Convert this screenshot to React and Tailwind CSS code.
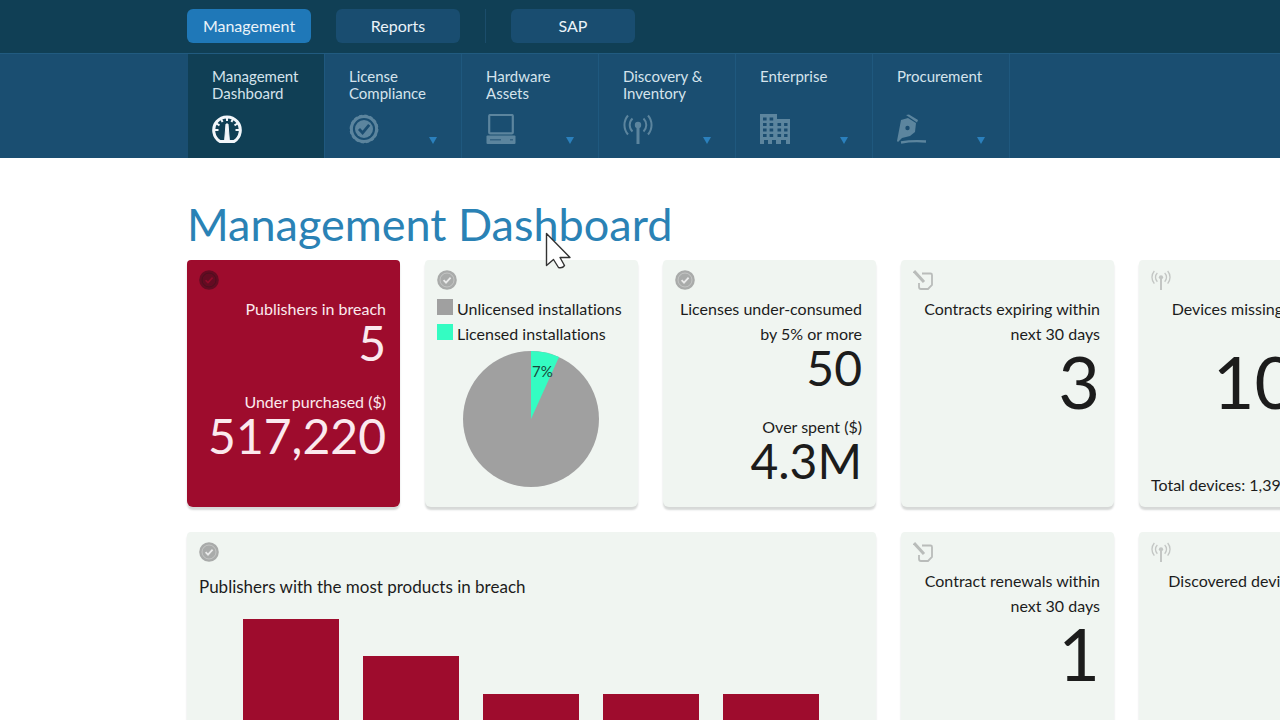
import clsx from 'clsx'

const GaugeIcon = ({ className }) => (
    <svg viewBox="0 0 30 30" className={className} fill="none" stroke="currentColor" aria-hidden="true">
        <path d="M8 27.5A13.3 13.3 0 1 1 22 27.5Z" strokeWidth="3" strokeLinejoin="round" />
        <path d="M15 3v4M9 5l1.6 3M21 5l-1.6 3M4.5 9.5l3 1.8M25.5 9.5l-3 1.8M2.5 16h4M27.5 16h-4" strokeWidth="2" />
        <path d="M14 10h2l1.5 18h-5z" fill="currentColor" strokeWidth="1" />
    </svg>
)

const BadgeIcon = ({ className }) => (
    <svg viewBox="0 0 30 30" className={className} fill="none" stroke="currentColor" aria-hidden="true">
        <circle cx="15" cy="15" r="12.6" strokeWidth="3" />
        <circle cx="15" cy="15" r="13.6" strokeWidth="1.6" strokeDasharray="3.2 2.14" />
        <circle cx="15" cy="15" r="9" fill="currentColor" stroke="none" />
        <path d="M10 15l3.6 3.8 6.6-8" className="stroke-[#1b4d70]" strokeWidth="2.8" />
    </svg>
)

const SealIcon = ({ className }) => (
    <svg viewBox="0 0 20 20" className={className} aria-hidden="true">
        <circle cx="10" cy="10" r="9.8" fill="currentColor" />
        <circle cx="10" cy="10" r="7" fill="none" stroke="#fff" strokeOpacity="0.3" />
        <path d="M6.6 10.2l2.4 2.4 4.6-5" fill="none" stroke="#fff" strokeOpacity="0.75" strokeWidth="1.8" />
    </svg>
)

const DarkSealIcon = ({ className }) => (
    <svg viewBox="0 0 20 20" className={className} aria-hidden="true">
        <circle cx="10" cy="10" r="9.8" fill="#640b22" />
        <circle cx="10" cy="10" r="7" fill="none" stroke="#4c101e" />
        <path d="M6.6 10.2l2.4 2.4 4.6-5" fill="none" stroke="#8f0c2a" strokeWidth="1.6" />
    </svg>
)

const ComputerIcon = ({ className }) => (
    <svg viewBox="0 0 30 30" className={className} aria-hidden="true">
        <path d="M4.2 1h21.6q1 0 1 1v16.400q0 1-1 1H4.2q-1 0-1-1V2q0-1 1-1z" fill="none" stroke="currentColor" strokeWidth="2.2" />
        <rect x="0.5" y="21.500" width="29" height="8.500" rx="1" fill="currentColor" />
        <path d="M4 25.800h11M24 25.800h3" stroke="#1b4d70" strokeOpacity="0.6" strokeWidth="1.4" />
    </svg>
)

const AntennaIcon = ({ className }) => (
    <svg viewBox="0 0 30 30" className={className} fill="none" stroke="currentColor" strokeWidth="2" aria-hidden="true">
        <path d="M9.5 4.5a9 9 0 0 0 0 13M20.5 4.5a9 9 0 0 1 0 13M5 1.5a14.5 14.5 0 0 0 0 19M25 1.5a14.5 14.5 0 0 1 0 19" />
        <circle cx="15" cy="11" r="3.2" fill="currentColor" stroke="none" />
        <path d="M15 12v18" strokeWidth="3" />
    </svg>
)

const BuildingIcon = ({ className }) => (
    <svg viewBox="0 0 30 30" className={className} aria-hidden="true">
        <path d="M0 0h17v5h13v25h-4v-4h-5v4h-5v-4h-4v4H8v-4H4v4H0z" fill="currentColor" />
        <path
            d="M3 5h12M3 10.5h12M3 16h12M3 21.5h12M17.5 10.5h10M17.5 16h10M17.5 21.5h10"
            stroke="#1b4d70"
            strokeWidth="2.8"
            strokeDasharray="3.6 3"
        />
    </svg>
)

const PenIcon = ({ className }) => (
    <svg viewBox="0 0 30 30" className={className} aria-hidden="true">
        <path d="M9 1l3-.5 9 5.5-1 2.5z" fill="currentColor" />
        <path d="M4 6l7-2 8 5-1 9-5 4-8 2-4 4-1-1z" fill="currentColor" />
        <circle cx="10.5" cy="14" r="2.2" fill="#1b4d70" />
        <path d="M4 28.5q11-2 25-1" fill="none" stroke="currentColor" strokeWidth="2.4" />
    </svg>
)

const ContractIcon = ({ className }) => (
    <svg viewBox="0 0 20 20" className={className} fill="none" stroke="currentColor" aria-hidden="true">
        <path d="M9 3.5h8.5q1.5 0 1.5 1.5v10l-4 4H8q-2 0-2-2v-4" strokeWidth="1.8" />
        <path d="M1 1l10 11" strokeWidth="3" />
    </svg>
)

const sections = [
    { label: 'Management', active: true },
    { label: 'Reports' },
    { label: 'SAP', separated: true }
]

const tabs = [
    { lines: ['Management', 'Dashboard'], icon: GaugeIcon, active: true },
    { lines: ['License', 'Compliance'], icon: BadgeIcon },
    { lines: ['Hardware', 'Assets'], icon: ComputerIcon },
    { lines: ['Discovery &', 'Inventory'], icon: AntennaIcon },
    { lines: ['Enterprise'], icon: BuildingIcon },
    { lines: ['Procurement'], icon: PenIcon }
]

const breachBars = [300, 263, 225, 225, 225]

const Card = ({ icon: Icon, iconColor = 'text-[#a9abaa]', className, children }) => (
    <section
        className={clsx(
            'flex flex-col rounded-t-sm rounded-b-md pt-[10px] pr-[14px] pb-[10px] pl-3 shadow-[0_3px_2px_#d6d8d7]',
            className || 'bg-[#f0f5f1] text-[#1c1c1c]'
        )}
    >
        <Icon className={clsx('mb-[6px] h-5 w-5 shrink-0', iconColor)} />
        {children}
    </section>
)

const Metric = ({ lines, value, large }) => (
    <div className="mb-6 text-right">
        {lines.map(line => (
            <p key={line} className="text-base leading-[25px] whitespace-nowrap">{line}</p>
        ))}
        <p className={large ? 'text-[72px] leading-[70px]' : 'text-5xl leading-[44px]'}>{value}</p>
    </div>
)

const Legend = ({ color, label }) => (
    <li className="flex items-center gap-1 text-base leading-[25px] whitespace-nowrap">
        <span className={clsx('mb-1 h-4 w-4', color)}></span>
        {label}
    </li>
)

const App = () => {
    return (
        <div className="relative h-screen overflow-hidden bg-white font-['Lato','Liberation_Sans',sans-serif] [font-variant-ligatures:none]">
            <header>
                <div className="flex h-[53px] items-center gap-[25px] bg-[#103f55] pb-px pl-[187px]">
                    {sections.map(section => (
                        <div key={section.label} className="flex items-center gap-[25px]">
                            {section.separated && <span className="h-[34px] w-px bg-[#1b4d6b]"></span>}
                            <button
                                type="button"
                                className={clsx(
                                    'h-[34px] w-[124px] rounded-md text-base text-[#eaf3f9]',
                                    section.active ? 'bg-[#1f78b8]' : 'bg-[#194d70]'
                                )}
                            >
                                {section.label}
                            </button>
                        </div>
                    ))}
                </div>
                <nav className="flex h-[105px] border-t border-[#215b80] bg-[#1a4e71] pl-[188px]">
                    {tabs.map(tab => (
                        <a
                            key={tab.lines[0]}
                            href="#"
                            className={clsx(
                                'flex w-[137px] flex-col justify-between border-r border-[#1f587e] px-6 pt-[14px] pb-[14px]',
                                tab.active ? 'bg-[#103f55]' : ''
                            )}
                        >
                            <span className="text-[15px] leading-[17px] text-[#d5e3ec]">
                                {tab.lines.map(line => (
                                    <span key={line} className="block whitespace-nowrap">{line}</span>
                                ))}
                            </span>
                            <span className="flex items-end justify-between">
                                <tab.icon className={clsx('h-[30px] w-[30px]', tab.active ? 'text-[#f2f6fa]' : 'text-[#5c859e]')} />
                                {!tab.active && (
                                    <svg viewBox="0 0 8 7" className="h-[7px] w-2 fill-[#2b80bd]" aria-hidden="true">
                                        <path d="M0 0h8L4 7z" />
                                    </svg>
                                )}
                            </span>
                        </a>
                    ))}
                </nav>
            </header>

            <main className="pt-9 pl-[187px]">
                <h1 className="mb-[6px] text-[45px] leading-[60px] whitespace-nowrap text-[#2a82b5]">Management Dashboard</h1>

                <div className="grid auto-cols-[213px] grid-flow-col grid-rows-[247px_420px] gap-[25px]">
                    <Card icon={DarkSealIcon} className="bg-[#9e0c2d] text-[#fbe9ee]">
                        <Metric lines={['Publishers in breach']} value="5" />
                        <Metric lines={['Under purchased ($)']} value="517,220" />
                    </Card>

                    <section className="col-span-3 flex flex-col rounded-t-sm rounded-b-md bg-[#f0f5f1] px-3 pt-[10px] text-[#1c1c1c] shadow-[0_3px_2px_#d6d8d7]">
                        <SealIcon className="mb-3 h-5 w-5 shrink-0 text-[#a9abaa]" />
                        <h2 className="mb-5 text-[17px] leading-[25px]">Publishers with the most products in breach</h2>
                        <div className="flex items-end gap-6 px-11">
                            {breachBars.map((height, index) => (
                                <div key={index} className="w-24 bg-[#9e0c2d]" style={{ height }}></div>
                            ))}
                        </div>
                    </section>

                    <Card icon={SealIcon}>
                        <ul>
                            <Legend color="bg-[#a0a0a0]" label="Unlicensed installations" />
                            <Legend color="bg-[#34fcc2]" label="Licensed installations" />
                        </ul>
                        <svg viewBox="0 0 136 136" className="mt-[5px] h-[136px] w-[136px] self-center" role="img" aria-label="7% licensed">
                            <circle cx="68" cy="68" r="68" fill="#a0a0a0" />
                            <path d="M68 68V0A68 68 0 0 1 96 6z" fill="#34fcc2" />
                            <text x="69" y="26" fontSize="15" fill="#17483a">7%</text>
                        </svg>
                    </Card>

                    <Card icon={SealIcon}>
                        <Metric lines={['Licenses under-consumed', 'by 5% or more']} value="50" />
                        <Metric lines={['Over spent ($)']} value="4.3M" />
                    </Card>

                    <Card icon={ContractIcon} iconColor="text-[#b9bcba]">
                        <Metric lines={['Contracts expiring within', 'next 30 days']} value="3" large />
                    </Card>
                    <Card icon={ContractIcon} iconColor="text-[#b9bcba]">
                        <Metric lines={['Contract renewals within', 'next 30 days']} value="1" large />
                    </Card>

                    <Card icon={AntennaIcon} iconColor="text-[#c3c6c4]">
                        <Metric lines={['Devices missing current', 'activity']} value="102" large />
                        <p className="mt-auto text-base leading-[25px] whitespace-nowrap">Total devices: 1,390</p>
                    </Card>
                    <Card icon={AntennaIcon} iconColor="text-[#c3c6c4]">
                        <Metric lines={['Discovered devices with', 'issues']} value="8" large />
                    </Card>
                </div>
            </main>

            {/* mouse pointer */}
            <svg viewBox="0 0 28 40" className="absolute top-[232px] left-[545px] h-10 w-7" aria-hidden="true">
                <path
                    d="M1.5 1.5v32l7-6 5 8q4 1 6-2l-4.500-8h10z"
                    fill="#fff"
                    stroke="#333"
                    strokeWidth="1.4"
                    strokeLinejoin="round"
                />
            </svg>
        </div>
    )
}

export default App
